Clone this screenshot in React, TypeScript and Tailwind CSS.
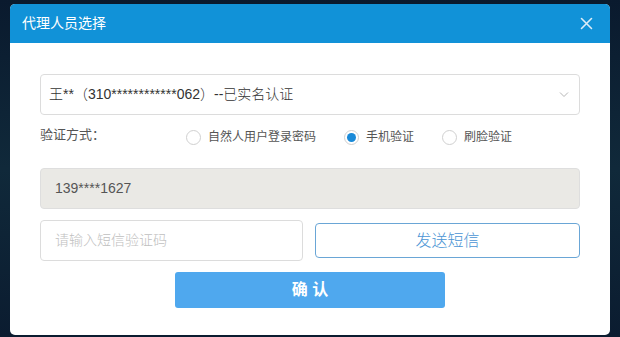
import React from "react";

export default function App() {
  const font = { fontFamily: '"Liberation Sans", "Noto Sans CJK SC", sans-serif' };
  return (
    <div
      className="w-[620px] h-[337px] overflow-hidden bg-gradient-to-b from-[#0a1a2e] via-[#10293a] to-[#0b1c30] pt-[4px] pl-[10px]"
      style={font}
    >
      <div className="w-[600px] h-[331px] bg-white rounded-[5px] overflow-hidden flex flex-col">
        <div className="h-[39px] bg-[#1192d8] flex items-center justify-between pl-[12px] pr-[17px]">
          <span className="text-white text-[14px]">代理人员选择</span>
          <svg width="13" height="13" viewBox="0 0 13 13">
            <path d="M1.5 1.5L11.5 11.5M11.5 1.5L1.5 11.5" stroke="#dcecf7" strokeWidth="1.6" strokeLinecap="round" />
          </svg>
        </div>
        <div className="flex flex-col px-[30px] pt-[31px]">
          <div className="h-[41px] border border-[#dcdcdc] rounded-[4px] flex items-center justify-between pl-[8px] pr-[10px]">
            <span className="text-[14px] text-[#333] font-light">王**（310************062）--已实名认证</span>
            <svg width="10" height="7" viewBox="0 0 10 7">
              <path d="M1 1.5L5 5.5L9 1.5" stroke="#b5b5b5" strokeWidth="1" fill="none" />
            </svg>
          </div>
          <div className="h-[44px] flex items-center text-[12px] text-[#555]">
            <span className="w-[146px] -mt-[4px] text-[13px]">验证方式：</span>
            <div className="flex items-center gap-[7px] w-[158px]">
              <span className="w-[15px] h-[15px] rounded-full border border-[#d0d0d0] bg-white" />
              <span>自然人用户登录密码</span>
            </div>
            <div className="flex items-center gap-[7px] w-[98px]">
              <span className="w-[15px] h-[15px] rounded-full border border-[#d0d0d0] bg-white flex items-center justify-center">
                <span className="w-[9px] h-[9px] rounded-full bg-[#1a8ad8]" />
              </span>
              <span>手机验证</span>
            </div>
            <div className="flex items-center gap-[7px]">
              <span className="w-[15px] h-[15px] rounded-full border border-[#d0d0d0] bg-white" />
              <span>刷脸验证</span>
            </div>
          </div>
          <div className="mt-[9px] h-[41px] bg-[#eae9e5] border border-[#dedede] rounded-[4px] flex items-center pl-[14px] text-[14px] text-[#555]">
            139****1627
          </div>
          <div className="mt-[11px] flex items-center gap-[12px]">
            <div className="w-[263px] h-[41px] border border-[#dcdcdc] rounded-[4px] flex items-center pl-[14px] text-[14px] text-[#c0c0c0] font-light">
              请输入短信验证码
            </div>
            <div className="flex-1 h-[35px] border border-[#6aa6d6] rounded-[4px] flex items-center justify-center text-[16px] text-[#4a94d4] font-light">
              发送短信
            </div>
          </div>
          <div className="mt-[11px] flex justify-center">
            <div className="w-[270px] h-[36px] bg-[#4fa8ee] rounded-[3px] flex items-center justify-center text-white text-[16px] font-bold">
              确 认
            </div>
          </div>
        </div>
      </div>
    </div>
  );
}
